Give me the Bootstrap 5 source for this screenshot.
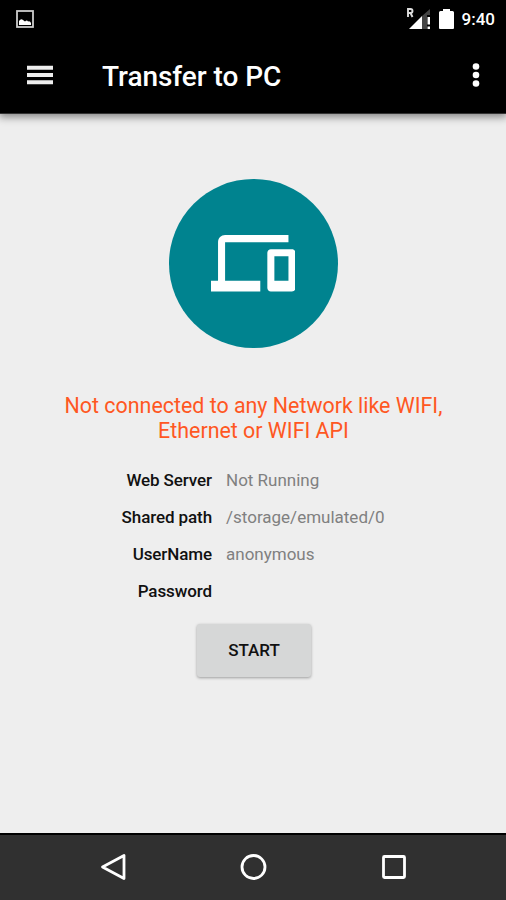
<!DOCTYPE html>
<html lang="en">
<head>
<meta charset="utf-8">
<meta name="viewport" content="width=device-width, initial-scale=1">
<title>Transfer to PC</title>
<link href="https://cdn.jsdelivr.net/npm/bootstrap@5.3.0/dist/css/bootstrap.min.css" rel="stylesheet">
<style>
body{font-family:Roboto,"Liberation Sans",sans-serif;background:#eee;width:506px;height:900px}
svg{display:block;flex:none}
.top-area{background:#000;height:114px;box-shadow:0 2px 8px 1px rgba(0,0,0,.45);border-bottom:1px solid #333}
.status{height:37px;padding:0 11px 0 16px}
.clock{font-size:17px;font-weight:500;line-height:20px;margin-left:8px}
.appbar{height:76px;padding:0 26px}
.title{font-size:28px;font-weight:500;line-height:32px;margin-left:48px;padding-top:4px;letter-spacing:-.05px}
.hero{width:169px;height:169px;background:#00838f;margin-top:65px}
.notice{font-size:21.4px;line-height:25px;color:#ff5722;margin-top:45px;padding-left:1px}
.info{margin-top:19px;font-size:17px;line-height:37px}
.key{width:212px;font-weight:500;color:#111;letter-spacing:-.1px}
.val{margin-left:14px;color:#808080}
.start{width:114px;height:53px;margin:14px 0 0 197px;background:#d6d7d7;border:0;border-radius:3px;font-size:17px;font-weight:500;color:#111;box-shadow:0 1px 3px rgba(0,0,0,.35)}
.navkeys{height:67px;background:#303030;border-top:2px solid #000;padding-bottom:2px}
.navkeys svg{margin:0 56.200px}
</style>
<script src="https://cdn.jsdelivr.net/npm/bootstrap@5.3.0/dist/js/bootstrap.bundle.min.js"></script>
</head>
<body class="d-flex flex-column overflow-hidden">
<header class="top-area text-white flex-shrink-0">
  <div class="status d-flex align-items-center">
    <svg width="18" height="18" viewBox="0 0 18 18"><rect x="1" y="1" width="16" height="16" fill="none" stroke="#ccc" stroke-width="1.800"/><path d="M3 15v-4q2-3 4-1l2 1.500q2-2 3 0 2-1 3 1.500v2z" fill="#fff"/></svg>
    <svg class="ms-auto" width="25" height="24" viewBox="0 0 25 24"><path d="M2 10V2h2.500a2 2 0 0 1 0 4H2m2.500 0 2 4" fill="none" stroke="#ddd" stroke-width="1.900"/><path d="M24 2v6h-3v14h-5V9z" fill="#444"/><path d="M3 22 16 9v13z" fill="#fff"/><path d="M21.500 10H24v7.500h-2.500zM21.500 19.500H24V22h-2.500z" fill="#fff"/></svg>
    <svg width="15" height="22" viewBox="0 0 15 22" class="ms-2"><path d="M4 1h7v2h2.500Q15 3 15 4.500V20q0 1-1 1H1q-1 0-1-1V4.500Q0 3 1.500 3H4z" fill="#fff"/></svg>
    <span class="clock">9:40</span>
  </div>
  <div class="appbar d-flex align-items-center">
    <svg width="28" height="20" viewBox="0 0 28 20"><path d="M1 2.700h26M1 10h26M1 17.300h26" stroke="#eee" stroke-width="4"/></svg>
    <h1 class="title mb-0">Transfer to PC</h1>
    <svg class="ms-auto" width="8" height="24" viewBox="0 0 8 24" fill="#fff"><circle cx="4" cy="3.500" r="3.300"/><circle cx="4" cy="12" r="3.300"/><circle cx="4" cy="20.500" r="3.300"/></svg>
  </div>
</header>
<main class="flex-grow-1">
  <div class="hero rounded-circle mx-auto d-flex align-items-center justify-content-center">
    <svg width="84.500" height="84.500" viewBox="0 0 24 24" fill="#fff"><path d="M4 6h18V4H4c-1.100 0-2 .9-2 2v11H0v3h14v-3H4V6zm19 2h-6c-.55 0-1 .45-1 1v10c0 .55.45 1 1 1h6c.55 0 1-.45 1-1V9c0-.55-.45-1-1-1zm-1 9h-4v-7h4v7z"/></svg>
  </div>
  <p class="notice text-center mb-0">Not connected to any Network like WIFI,<br>Ethernet or WIFI API</p>
  <div class="info">
    <div class="d-flex"><div class="key text-end">Web Server</div><div class="val">Not Running</div></div>
    <div class="d-flex"><div class="key text-end">Shared path</div><div class="val">/storage/emulated/0</div></div>
    <div class="d-flex"><div class="key text-end">UserName</div><div class="val">anonymous</div></div>
    <div class="d-flex"><div class="key text-end">Password</div><div class="val"></div></div>
  </div>
  <button type="button" class="start d-block p-0">START</button>
</main>
<footer class="navkeys d-flex justify-content-center align-items-center flex-shrink-0">
  <svg width="28" height="28" viewBox="0 0 28 28" fill="none" stroke="#fff" stroke-width="2.800"><path d="M3.500 14 25 2.500v23z" stroke-linejoin="round"/></svg>
  <svg width="28" height="28" viewBox="0 0 28 28" fill="none" stroke="#fff" stroke-width="2.800"><circle cx="14.500" cy="14" r="11.500"/></svg>
  <svg width="28" height="28" viewBox="0 0 28 28" fill="none" stroke="#fff" stroke-width="2.800"><rect x="4.500" y="3.500" width="21" height="21" rx="1"/></svg>
</footer>
</body>
</html>
